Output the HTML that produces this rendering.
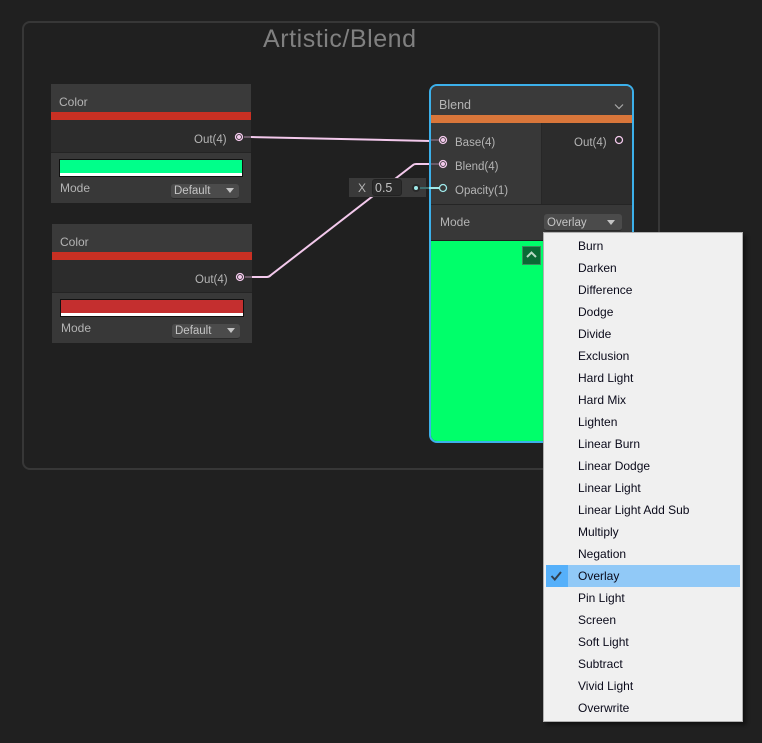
<!DOCTYPE html>
<html><head><meta charset="utf-8">
<style>
html,body{margin:0;padding:0;background:#202020;}
#r{position:relative;width:762px;height:743px;overflow:hidden;background:#202020;font-family:"Liberation Sans",sans-serif;}
#r div,#r span{position:absolute;box-sizing:border-box;}
.t{color:#b4b4b4;font-size:12px;line-height:14px;white-space:nowrap;}
.dd{background:#4b4b4b;border-radius:3px;border-bottom:1px solid #2a2a2a;height:15px;}
.dd .l{color:#c4c4c4;font-size:11.500px;line-height:13px;left:3px;top:1px;white-space:nowrap;}
.arr{width:0;height:0;border-left:4px solid transparent;border-right:4px solid transparent;border-top:5px solid #c4c4c4;}
.m{left:34px;color:#0a0a1a;font-size:12px;line-height:22px;height:22px;white-space:nowrap;}
</style></head><body>
<div id="r">
<div style="left:22px;top:21px;width:638px;height:449px;border:2px solid #373737;border-radius:8px;"></div>
<div style="left:263px;top:25px;color:#808080;font-size:25px;line-height:28px;white-space:nowrap;letter-spacing:.55px;">Artistic/Blend</div>

<!-- Wires behind nodes -->
<svg style="position:absolute;left:0;top:0;" width="762" height="743">
  <path d="M251 137L430 141" stroke="#f3c9ec" stroke-width="2" fill="none"/>
  <path d="M252 277H267Q269 277 271 275L413 165Q414 164 416 164H429" stroke="#f3c9ec" stroke-width="2" fill="none"/>
</svg>

<!-- Color node 1 -->
<div style="left:51px;top:84px;width:200px;height:119px;background:#383838;">
  <div style="left:0;top:0;width:200px;height:28px;background:#3a3a3a;"></div>
  <div class="t" style="left:8px;top:11px;">Color</div>
  <div style="left:0;top:28px;width:200px;height:8px;background:#c93023;"></div>
  <div style="left:0;top:36px;width:200px;height:33px;background:#2c2c2c;border-bottom:1px solid #242424;"></div>
  <div class="t" style="left:143px;top:49px;font-size:11.500px;">Out(4)</div>
  <div style="left:8px;top:75px;width:184px;height:18px;background:#111;"></div>
  <div style="left:9px;top:76px;width:182px;height:13px;background:#00ff8a;"></div>
  <div style="left:9px;top:89px;width:182px;height:3px;background:#fff;"></div>
  <div class="t" style="left:9px;top:97px;">Mode</div>
  <div class="dd" style="left:120px;top:100px;width:68px;"><span class="l" style="left:3px;">Default</span><span class="arr" style="left:55px;top:4px;"></span></div>
</div>
<!-- Color node 2 -->
<div style="left:52px;top:224px;width:200px;height:119px;background:#383838;">
  <div style="left:0;top:0;width:200px;height:28px;background:#3a3a3a;"></div>
  <div class="t" style="left:8px;top:11px;">Color</div>
  <div style="left:0;top:28px;width:200px;height:8px;background:#c93023;"></div>
  <div style="left:0;top:36px;width:200px;height:33px;background:#2c2c2c;border-bottom:1px solid #242424;"></div>
  <div class="t" style="left:143px;top:49px;font-size:11.500px;">Out(4)</div>
  <div style="left:8px;top:75px;width:184px;height:18px;background:#111;"></div>
  <div style="left:9px;top:76px;width:182px;height:13px;background:#c42f2f;"></div>
  <div style="left:9px;top:89px;width:182px;height:3px;background:#fff;"></div>
  <div class="t" style="left:9px;top:97px;">Mode</div>
  <div class="dd" style="left:120px;top:100px;width:68px;"><span class="l" style="left:3px;">Default</span><span class="arr" style="left:55px;top:4px;"></span></div>
</div>

<!-- Blend node -->
<div style="left:429px;top:84px;width:205px;height:359px;border:2px solid #3cb0ea;border-radius:8px;background:#383838;overflow:hidden;">
  <div style="left:0;top:0;width:201px;height:29px;background:#3a3a3a;"></div>
  <div class="t" style="left:8px;top:12px;font-size:12.500px;">Blend</div>
  <svg style="position:absolute;left:183px;top:17px;" width="12" height="8"><path d="M1 1.500L5 5.500L9 1.500" fill="none" stroke="#a8a8a8" stroke-width="1.200"/></svg>
  <div style="left:0;top:29px;width:201px;height:8px;background:#d9763a;"></div>
  <div style="left:0;top:37px;width:110px;height:81px;background:#383838;"></div>
  <div style="left:110px;top:37px;width:1px;height:81px;background:#272727;"></div>
  <div style="left:111px;top:37px;width:90px;height:81px;background:#2c2c2c;"></div>
  <div style="left:0;top:118px;width:201px;height:1px;background:#252525;"></div>
  <div class="t" style="left:24px;top:50px;font-size:11.500px;">Base(4)</div>
  <div class="t" style="left:24px;top:74px;font-size:11.500px;">Blend(4)</div>
  <div class="t" style="left:24px;top:98px;font-size:11.500px;">Opacity(1)</div>
  <div class="t" style="left:143px;top:50px;font-size:11.500px;">Out(4)</div>
  <div class="t" style="left:9px;top:129px;">Mode</div>
  <div class="dd" style="left:113px;top:128px;width:78px;height:17px;"><span class="l" style="left:3px;top:3px;">Overlay</span><span class="arr" style="left:63px;top:6px;"></span></div>
  <div style="left:0;top:154px;width:201px;height:1px;background:#1f1f1f;"></div>
  <div style="left:0;top:155px;width:201px;height:200px;background:#00ff6a;"></div>
  <div style="left:91px;top:160px;width:19px;height:19px;background:#0a6a35;border:1px solid #3f8a5f;"></div>
  <svg style="position:absolute;left:94px;top:164px;" width="14" height="10"><path d="M2 7L6.500 2.500L11 7" fill="none" stroke="#b8d8c4" stroke-width="2"/></svg>
</div>

<!-- Inline opacity field -->
<div style="left:349px;top:178px;width:77px;height:19px;background:#3a3a3a;"></div>
<div class="t" style="left:358px;top:181px;">X</div>
<div style="left:372px;top:179px;width:30px;height:17px;background:#2a2a2a;border:1px solid #222;border-radius:3px;"></div>
<div class="t" style="left:375px;top:181px;font-size:12.500px;color:#c0c0c0;">0.5</div>

<!-- Ports -->
<svg style="position:absolute;left:0;top:0;" width="762" height="743">
  <path d="M244 137H251" stroke="#6b5a68" stroke-width="2"/>
  <path d="M245 277H252" stroke="#6b5a68" stroke-width="2"/>
  <path d="M431 140H440M431 164H440" stroke="#6b5a68" stroke-width="2"/>
  <path d="M420 188H429" stroke="#3e6f70" stroke-width="2"/>
  <path d="M429 188H441" stroke="#9fe9ea" stroke-width="2"/>
  <circle cx="239" cy="137" r="3.500" fill="#2c2c2c" stroke="#f3c9ec" stroke-width="1.300"/><circle cx="239" cy="137" r="2" fill="#f3c9ec"/>
  <circle cx="240" cy="277" r="3.500" fill="#2c2c2c" stroke="#f3c9ec" stroke-width="1.300"/><circle cx="240" cy="277" r="2" fill="#f3c9ec"/>
  <circle cx="443" cy="140" r="3.500" fill="#383838" stroke="#f3c9ec" stroke-width="1.300"/><circle cx="443" cy="140" r="2" fill="#f3c9ec"/>
  <circle cx="443" cy="164" r="3.500" fill="#383838" stroke="#f3c9ec" stroke-width="1.300"/><circle cx="443" cy="164" r="2" fill="#f3c9ec"/>
  <circle cx="443" cy="188" r="3.500" fill="#383838" stroke="#9fe9ea" stroke-width="1.300"/>
  <circle cx="619" cy="140" r="3.500" fill="#2c2c2c" stroke="#f3c9ec" stroke-width="1.300"/>
  <circle cx="416" cy="188" r="4" fill="#2a2a2a"/><circle cx="416" cy="188" r="2" fill="#9fe9ea"/>
</svg>

<!-- Dropdown menu -->
<div style="left:543px;top:232px;width:200px;height:490px;background:#f0f0f0;border:1px solid #b0b0b0;box-shadow:3px 3px 4px rgba(0,0,0,.45);">
  <div style="left:2px;top:332px;width:194px;height:22px;background:#91c9f7;"></div>
  <div style="left:2px;top:332px;width:22px;height:22px;background:#56b0fa;"></div>
  <svg style="position:absolute;left:6px;top:337px;" width="14" height="12"><path d="M1.500 6L4.800 9.500L11 2" fill="none" stroke="#33404e" stroke-width="2"/></svg>
  <div class="m" style="top:2px;">Burn</div>
  <div class="m" style="top:24px;">Darken</div>
  <div class="m" style="top:46px;">Difference</div>
  <div class="m" style="top:68px;">Dodge</div>
  <div class="m" style="top:90px;">Divide</div>
  <div class="m" style="top:112px;">Exclusion</div>
  <div class="m" style="top:134px;">Hard Light</div>
  <div class="m" style="top:156px;">Hard Mix</div>
  <div class="m" style="top:178px;">Lighten</div>
  <div class="m" style="top:200px;">Linear Burn</div>
  <div class="m" style="top:222px;">Linear Dodge</div>
  <div class="m" style="top:244px;">Linear Light</div>
  <div class="m" style="top:266px;">Linear Light Add Sub</div>
  <div class="m" style="top:288px;">Multiply</div>
  <div class="m" style="top:310px;">Negation</div>
  <div class="m" style="top:332px;">Overlay</div>
  <div class="m" style="top:354px;">Pin Light</div>
  <div class="m" style="top:376px;">Screen</div>
  <div class="m" style="top:398px;">Soft Light</div>
  <div class="m" style="top:420px;">Subtract</div>
  <div class="m" style="top:442px;">Vivid Light</div>
  <div class="m" style="top:464px;">Overwrite</div>
</div>
</div>
</body></html>
